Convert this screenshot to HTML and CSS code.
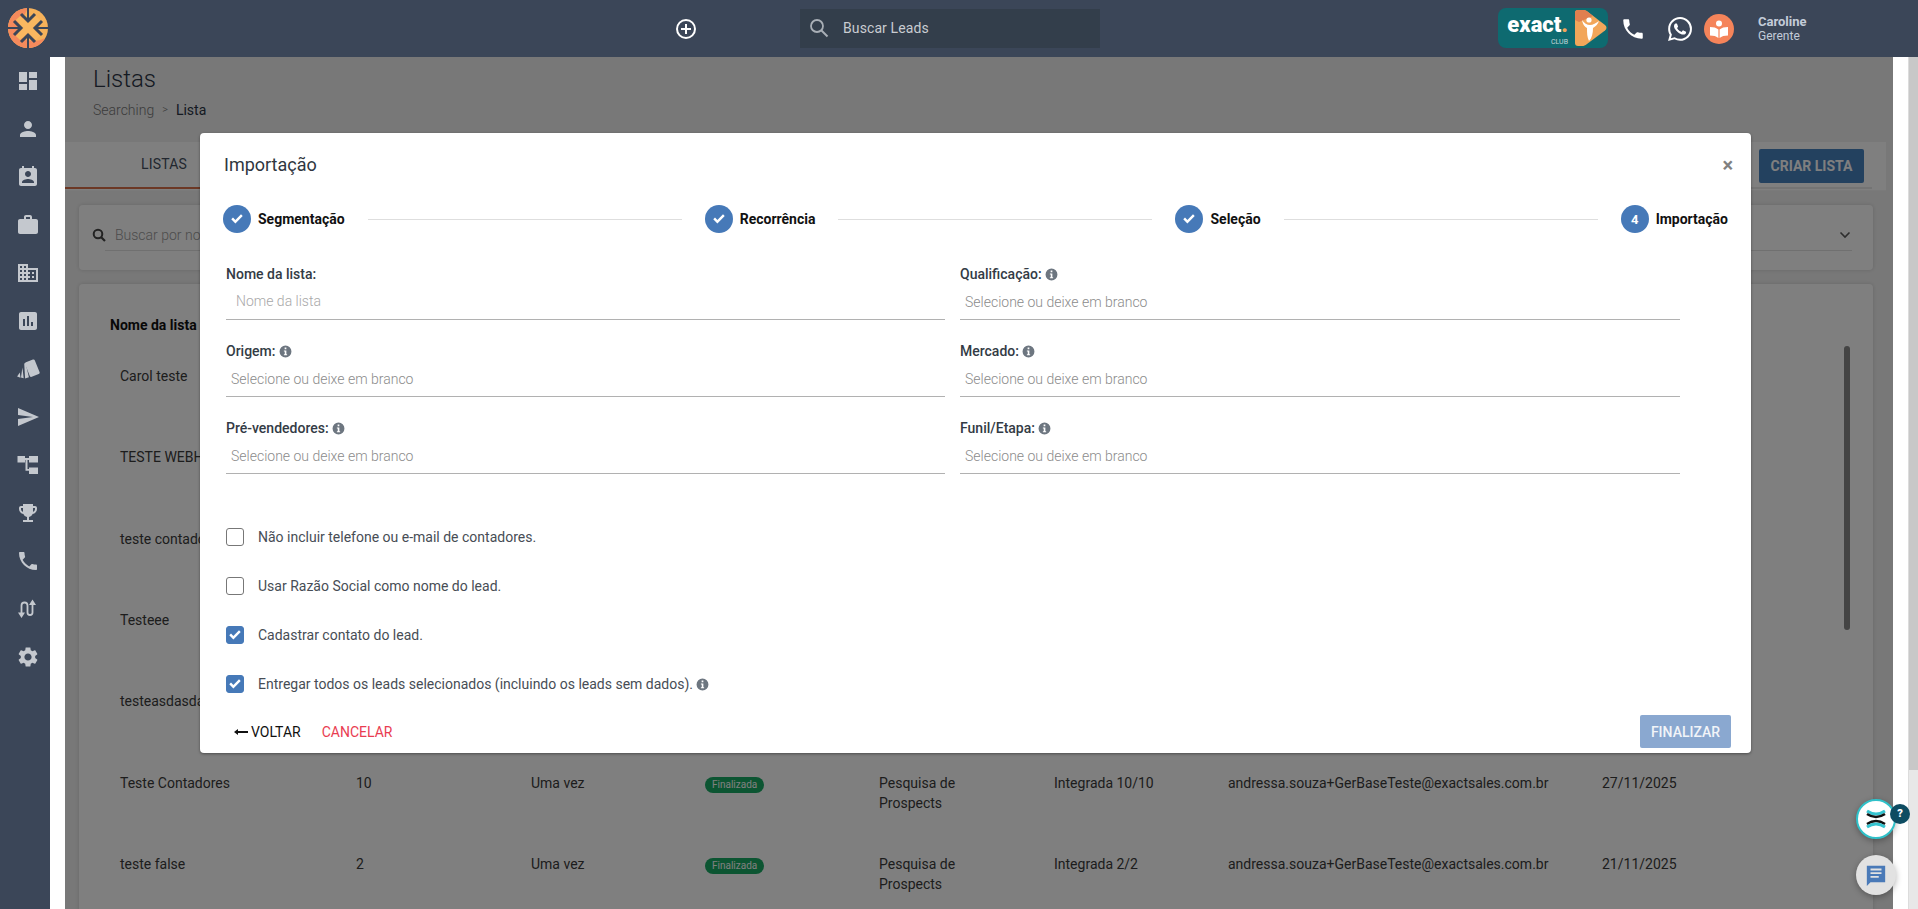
FILE: index.html
```html
<!DOCTYPE html>
<html lang="pt-BR">
<head>
<meta charset="utf-8">
<title>Listas</title>
<link rel="stylesheet" href="styles.css">
</head>
<body>
<svg class="sprites" aria-hidden="true">
  <symbol id="info" viewBox="0 0 24 24"><path d="M12 1a11 11 0 1 0 0 22 11 11 0 0 0 0-22zm-1.6 3.8h3.2v3.2h-3.2zM15 19H9v-2h1.6v-5H9v-2h4.6v7H15z"/></symbol>
  <symbol id="check" viewBox="0 0 24 24"><path d="M9.6 18.6 3.4 12.4l2.6-2.6 3.6 3.6 8.4-8.4 2.6 2.6z"/></symbol>
  <symbol id="phone" viewBox="0 0 24 24"><path d="M6.62 10.79c1.44 2.83 3.76 5.14 6.59 6.59l2.2-2.2c.27-.27.67-.36 1.02-.24 1.12.37 2.33.57 3.57.57.55 0 1 .45 1 1V20c0 .55-.45 1-1 1-9.39 0-17-7.61-17-17 0-.55.45-1 1-1h3.5c.55 0 1 .45 1 1 0 1.25.2 2.45.57 3.57.11.35.03.74-.25 1.02l-2.2 2.2z"/></symbol>
</svg>

<header class="topbar">
  <div class="brand">
    <svg width="42" height="42" viewBox="0 0 42 42">
      <circle cx="21" cy="21" r="20" fill="#f6b25a"/>
      <path d="M21 1a20 20 0 0 0-20 20h9a20 20 0 0 1 6-10zM1 21a20 20 0 0 0 20 20c8 0 14-4 17-10-8 4-17 4-24-1-3-2-4-5-4-9z" fill="#f58a5c"/>
      <path d="M21 1v12M21 29v12M1 21h12M29 21h12" stroke="#3b4658" stroke-width="2"/>
      <path d="M11 11l20 20M31 11 11 31" stroke="#f9b860" stroke-width="6"/>
      <path d="M14 7l7 7 7-7M14 35l7-7 7 7M7 14l7 7-7 7M35 14l-7 7 7 7" fill="none" stroke="#3b4658" stroke-width="3"/>
    </svg>
  </div>
  <div class="topcenter">
    <svg class="addicon" width="22" height="22" viewBox="0 0 22 22"><circle cx="11" cy="11" r="9" fill="none" stroke="#fff" stroke-width="2"/><path d="M11 6v10M6 11h10" stroke="#fff" stroke-width="2"/></svg>
    <div class="leadsearch">
      <svg width="20" height="20" viewBox="0 0 20 20"><circle cx="8" cy="8" r="6" fill="none" stroke="#a9afb6" stroke-width="1.8"/><path d="M12.5 12.5 18.5 18.5" stroke="#a9afb6" stroke-width="2"/></svg>
      <span>Buscar Leads</span>
    </div>
  </div>
  <div class="topright">
    <div class="club">
      <div class="clubtext"><span class="clubname">exact<i>.</i></span><span class="clubsub">CLUB</span></div>
      <svg width="32" height="36" viewBox="0 0 32 36">
        <path d="M3 0h5c2 0 3 .6 5 2l17 13c2 1.600 2 4 0 5.600L12 34c-2 1.400-3 2-5 2H3c-2 0-3-1-3-3V3c0-2 1-3 3-3z" fill="#f2a65a"/>
        <path d="M0 3c0-2 1-3 3-3h5c2 0 3 .6 5 2l5 4-14 6-4-2z" fill="#e07f4f"/>
        <circle cx="14" cy="10" r="2.600" fill="#fff"/>
        <path d="M7 10c1 5 3 7 5 8 0 5 0 9 2 13 3-3 4-8 4-13 3-2 5-4 6-7-3 2-6 4-9 4-3 0-6-2-8-5z" fill="#fff"/>
      </svg>
    </div>
    <svg class="ticon phone" width="26" height="26" viewBox="0 0 24 24" fill="#fff"><use href="#phone"/></svg>
    <svg class="ticon wa" width="24" height="24" viewBox="0 0 24 24" fill="#fff"><path d="M17.472 14.382c-.297-.149-1.758-.867-2.03-.967-.273-.099-.471-.148-.67.15-.197.297-.767.966-.94 1.164-.173.199-.347.223-.644.075-.297-.15-1.255-.463-2.39-1.475-.883-.788-1.48-1.761-1.653-2.059-.173-.297-.018-.458.13-.606.134-.133.298-.347.446-.52.149-.174.198-.298.298-.497.099-.198.05-.371-.025-.52-.075-.149-.669-1.612-.916-2.207-.242-.579-.487-.5-.669-.51-.173-.008-.371-.01-.57-.01-.198 0-.52.074-.792.372-.272.297-1.04 1.016-1.04 2.479 0 1.462 1.065 2.875 1.213 3.074.149.198 2.096 3.2 5.077 4.487.709.306 1.262.489 1.694.625.712.227 1.36.195 1.871.118.571-.085 1.758-.719 2.006-1.413.248-.694.248-1.289.173-1.413-.074-.124-.272-.198-.57-.347m-5.421 7.403h-.004a9.87 9.87 0 01-5.031-1.378l-.361-.214-3.741.982.998-3.648-.235-.374a9.86 9.86 0 01-1.51-5.26c.001-5.45 4.436-9.884 9.888-9.884 2.64 0 5.122 1.03 6.988 2.898a9.825 9.825 0 012.893 6.994c-.003 5.45-4.437 9.884-9.885 9.884m8.413-18.297A11.815 11.815 0 0012.05 0C5.495 0 .16 5.335.157 11.892c0 2.096.547 4.142 1.588 5.945L.057 24l6.305-1.654a11.882 11.882 0 005.683 1.448h.005c6.554 0 11.89-5.335 11.893-11.893a11.821 11.821 0 00-3.48-8.413z"/></svg>
    <div class="learn">
      <svg width="20" height="20" viewBox="0 0 20 20" fill="#fff"><circle cx="10" cy="4.500" r="3"/><path d="M1 8c3.500 0 6.500.8 8.400 2.500V19C7.500 17.300 4.500 16.500 1 16.500zM19 8c-3.500 0-6.500.8-8.400 2.500V19c1.900-1.700 4.900-2.500 8.400-2.500z"/></svg>
    </div>
    <div class="user"><strong>Caroline</strong><span>Gerente</span></div>
  </div>
</header>

<div class="body">
  <nav class="sidebar">
    <svg viewBox="0 0 24 24"><path d="M3 13h8V3H3v10zm0 8h8v-6H3v6zm10 0h8V11h-8v10zm0-18v6h8V3h-8z"/></svg>
    <svg viewBox="0 0 24 24"><path d="M12 12c2.210 0 4-1.790 4-4s-1.790-4-4-4-4 1.790-4 4 1.790 4 4 4zm0 2c-2.670 0-8 1.340-8 4v2h16v-2c0-2.660-5.330-4-8-4z"/></svg>
    <svg viewBox="0 0 24 24"><path d="M19 3h-1V1h-2v2H8V1H6v2H5c-1.110 0-2 .9-2 2v14c0 1.100.89 2 2 2h14c1.100 0 2-.9 2-2V5c0-1.100-.9-2-2-2zm-7 3c1.660 0 3 1.340 3 3s-1.340 3-3 3-3-1.340-3-3 1.340-3 3-3zm6 12H6v-1c0-2 4-3.100 6-3.100s6 1.100 6 3.100v1z"/></svg>
    <svg viewBox="0 0 24 24"><path d="M20 6h-4V4c0-1.110-.89-2-2-2h-4c-1.110 0-2 .89-2 2v2H4c-1.110 0-1.990.89-1.990 2L2 19c0 1.110.89 2 2 2h16c1.110 0 2-.89 2-2V8c0-1.110-.89-2-2-2zm-6 0h-4V4h4v2z"/></svg>
    <svg viewBox="0 0 24 24"><path d="M12 7V3H2v18h20V7H12zM6 19H4v-2h2v2zm0-4H4v-2h2v2zm0-4H4V9h2v2zm0-4H4V5h2v2zm4 12H8v-2h2v2zm0-4H8v-2h2v2zm0-4H8V9h2v2zm0-4H8V5h2v2zm10 12h-8v-2h2v-2h-2v-2h2v-2h-2V9h8v10zm-2-8h-2v2h2v-2zm0 4h-2v2h2v-2z"/></svg>
    <svg viewBox="0 0 24 24"><path d="M19 3H5c-1.100 0-2 .9-2 2v14c0 1.100.9 2 2 2h14c1.100 0 2-.9 2-2V5c0-1.100-.9-2-2-2zM9 17H7v-7h2v7zm4 0h-2V7h2v10zm4 0h-2v-4h2v4z"/></svg>
    <svg viewBox="0 0 24 24"><rect x="11" y="3.500" width="10.500" height="15.500" rx="1.500" transform="rotate(-22 16 11)"/><path d="M8.200 6.500 9.600 6l3.300 14.300-3.800 1.200zM6.400 10.500l1.300 10.700-2.700-.6zM3.800 15.500l.7 5.300-3.400-1.200z"/></svg>
    <svg viewBox="0 0 24 24"><path d="M2.010 21 23 12 2.010 3 2 10l15 2-15 2z"/></svg>
    <svg viewBox="0 0 24 24"><path d="M1.500 3H9v2h4v-2h9v6.500h-9V7h-1.500v9H13v-1.500h9V21h-9v-3.200H9.500V7H9v2.500H1.500z"/></svg>
    <svg viewBox="0 0 24 24"><path d="M19 5h-2V3H7v2H5c-1.100 0-2 .9-2 2v1c0 2.550 1.920 4.630 4.390 4.940.63 1.500 1.980 2.630 3.610 2.960V19H7v2h10v-2h-4v-3.100c1.630-.33 2.980-1.460 3.610-2.960C19.080 12.630 21 10.550 21 8V7c0-1.100-.9-2-2-2zM5 8V7h2v3.820C5.840 10.400 5 9.300 5 8zm14 0c0 1.300-.84 2.400-2 2.820V7h2v1z"/></svg>
    <svg viewBox="0 0 24 24"><use href="#phone"/></svg>
    <svg viewBox="0 0 24 24"><path d="M5.500 16V8.500a3 3 0 0 1 6 0v7a2.500 2.500 0 0 0 5 0V7" fill="none" stroke="#c4c8ce" stroke-width="1.800"/><path d="M2 15.500h7L5.500 21zM13 8h7l-3.500-5.500z"/></svg>
    <svg viewBox="0 0 24 24"><path d="M19.140 12.940c.04-.3.06-.61.06-.94 0-.32-.02-.64-.07-.94l2.030-1.580c.18-.14.23-.41.12-.61l-1.920-3.320c-.12-.22-.37-.29-.59-.22l-2.390.96c-.5-.38-1.030-.7-1.620-.94l-.36-2.540c-.04-.24-.24-.41-.48-.41h-3.840c-.24 0-.43.17-.47.41l-.36 2.540c-.59.24-1.130.57-1.620.94l-2.390-.96c-.22-.08-.47 0-.59.22L2.740 8.870c-.12.21-.08.47.12.61l2.030 1.580c-.05.3-.09.63-.09.94s.02.64.07.94l-2.030 1.580c-.18.14-.23.41-.12.61l1.920 3.320c.12.22.37.29.59.22l2.390-.96c.5.38 1.030.7 1.620.94l.36 2.540c.05.24.24.41.48.41h3.840c.24 0 .44-.17.47-.41l.36-2.540c.59-.24 1.130-.56 1.620-.94l2.390.96c.22.08.47 0 .59-.22l1.920-3.320c.12-.22.07-.47-.12-.61l-2.010-1.580zM12 15.600c-1.980 0-3.600-1.620-3.600-3.600s1.620-3.600 3.600-3.600 3.600 1.620 3.600 3.600-1.620 3.600-3.600 3.600z"/></svg>
  </nav>

  <div class="gutter"></div>

  <main class="page">
    <div class="pagehead">
      <h1>Listas</h1>
      <p class="crumbs"><span class="muted">Searching</span><span class="muted sep">&gt;</span><span>Lista</span></p>
    </div>
    <div class="tabs">
      <span class="tab">LISTAS</span>
      <button class="create">CRIAR LISTA</button>
    </div>
    <div class="card filters">
      <svg class="lens" width="14" height="14" viewBox="0 0 14 14"><circle cx="6" cy="6" r="4.300" fill="none" stroke="#444" stroke-width="2"/><path d="M9.200 9.200 13 13" stroke="#444" stroke-width="2.200"/></svg>
      <div class="filterrow">
        <span class="searchph">Buscar por nome</span>
        <svg class="chev" width="12" height="8" viewBox="0 0 12 8"><path d="M1.500 1.500 6 6l4.500-4.500" fill="none" stroke="#5c5c5c" stroke-width="1.600"/></svg>
      </div>
    </div>
    <div class="card listcard">
      <div class="row head"><b>Nome da lista</b></div>
      <div class="row"><span class="c1">Carol teste</span></div>
      <div class="row"><span class="c1">TESTE WEBHOOK</span></div>
      <div class="row"><span class="c1">teste contadores</span></div>
      <div class="row"><span class="c1">Testeee</span></div>
      <div class="row"><span class="c1">testeasdasdasd</span></div>
      <div class="row">
        <span class="c1">Teste Contadores</span><span class="c2">10</span><span class="c3">Uma vez</span>
        <span class="c4"><em class="badge">Finalizada</em></span><span class="c5">Pesquisa de Prospects</span>
        <span class="c6">Integrada 10/10</span><span class="c7">andressa.souza+GerBaseTeste@exactsales.com.br</span><span class="c8">27/11/2025</span>
      </div>
      <div class="row">
        <span class="c1">teste false</span><span class="c2">2</span><span class="c3">Uma vez</span>
        <span class="c4"><em class="badge">Finalizada</em></span><span class="c5">Pesquisa de Prospects</span>
        <span class="c6">Integrada 2/2</span><span class="c7">andressa.souza+GerBaseTeste@exactsales.com.br</span><span class="c8">21/11/2025</span>
      </div>
      <div class="tablescroll"></div>
    </div>
  </main>

  <div class="gutter right"></div>
  <div class="pagescroll"><div class="thumb"></div></div>

  <div class="backdrop"></div>

  <section class="modal">
    <div class="mhead"><h2>Importação</h2><span class="close">×</span></div>
    <div class="stepper">
      <span class="dot"><svg width="16" height="16" fill="#fff"><use href="#check"/></svg></span><b>Segmentação</b><i class="bar"></i>
      <span class="dot"><svg width="16" height="16" fill="#fff"><use href="#check"/></svg></span><b>Recorrência</b><i class="bar"></i>
      <span class="dot"><svg width="16" height="16" fill="#fff"><use href="#check"/></svg></span><b>Seleção</b><i class="bar"></i>
      <span class="dot">4</span><b>Importação</b>
    </div>
    <div class="formgrid">
      <label class="field"><span class="lbl">Nome da lista:</span><span class="inp indent">Nome da lista</span></label>
      <label class="field"><span class="lbl">Qualificação: <svg class="inf"><use href="#info"/></svg></span><span class="inp">Selecione ou deixe em branco</span></label>
      <label class="field"><span class="lbl">Origem: <svg class="inf"><use href="#info"/></svg></span><span class="inp">Selecione ou deixe em branco</span></label>
      <label class="field"><span class="lbl">Mercado: <svg class="inf"><use href="#info"/></svg></span><span class="inp">Selecione ou deixe em branco</span></label>
      <label class="field"><span class="lbl">Pré-vendedores: <svg class="inf"><use href="#info"/></svg></span><span class="inp">Selecione ou deixe em branco</span></label>
      <label class="field"><span class="lbl">Funil/Etapa: <svg class="inf"><use href="#info"/></svg></span><span class="inp">Selecione ou deixe em branco</span></label>
    </div>
    <div class="checks">
      <div class="chk"><span class="box"></span>Não incluir telefone ou e-mail de contadores.</div>
      <div class="chk"><span class="box"></span>Usar Razão Social como nome do lead.</div>
      <div class="chk"><span class="box on"><svg width="16" height="16" fill="#fff"><use href="#check"/></svg></span>Cadastrar contato do lead.</div>
      <div class="chk"><span class="box on"><svg width="16" height="16" fill="#fff"><use href="#check"/></svg></span>Entregar todos os leads selecionados (incluindo os leads sem dados).&nbsp;<svg class="inf"><use href="#info"/></svg></div>
    </div>
    <div class="mfoot">
      <span class="back"><svg width="14" height="8" viewBox="0 0 14 8"><path d="M0 4l4-3v2h10v2H4v2z" fill="#111"/></svg>VOLTAR</span>
      <span class="cancel">CANCELAR</span>
      <button class="finish">FINALIZAR</button>
    </div>
  </section>

  <div class="fab help">
    <svg width="22" height="22" viewBox="0 0 22 22"><path d="M2 3c6 4 12 4 18 0" fill="none" stroke="#35c3cf" stroke-width="3"/><path d="M2 6c6 4 12 4 18 0M2 16c6-4 12-4 18 0" fill="none" stroke="#111" stroke-width="2.500"/><path d="M2 19c6-4 12-4 18 0" fill="none" stroke="#35c3cf" stroke-width="3"/></svg>
    <span class="q">?</span>
  </div>
  <div class="fab chat">
    <svg width="22" height="22" viewBox="0 0 24 24" fill="#4a7ab8"><path d="M22 2H2v22l4-4h16zM6 13h9v2H6zm0-4h12v2H6zm0-4h12v2H6z"/></svg>
  </div>
</div>
</body>
</html>
```

FILE: styles.css
```css
* { box-sizing: border-box; }
html, body { margin: 0; height: 100%; overflow: hidden; }
body { font-family: Roboto, "Liberation Sans", sans-serif; font-size: 14px; color: #333; background: #fff; }
.sprites { display: none; }

.topbar { height: 57px; background: #3b4658; display: flex; align-items: center; position: relative; z-index: 5; }
.brand { width: 50px; display: flex; padding-left: 7px; margin-top: -1px; }
.topcenter { display: flex; align-items: center; margin-left: 625px; }
.addicon { margin-right: 103px; }
.leadsearch { width: 300px; height: 39px; background: #333e4b; display: flex; align-items: center; padding-left: 9px; color: #c9ccd1; font-size: 14px; gap: 14px; margin-top: -1px; letter-spacing: .1px; }
.topright { display: flex; align-items: center; margin-left: 398px; }
.club { width: 110px; height: 40px; background: #0e6a70; border-radius: 8px; display: flex; align-items: center; padding-left: 7px; gap: 7px; margin-top: -1px; }
.clubtext { display: flex; flex-direction: column; align-items: flex-end; width: 63px; margin-top: 5px; color: #fff; }
.clubname { font-size: 22px; font-weight: 900; line-height: 20px; }
.clubname i { color: #f2a65a; font-style: normal; }
.clubsub { font-size: 7px; line-height: 8px; margin-top: 3px; color: #c8d8da; }
.ticon.phone { margin-left: 12px; }
.ticon.wa { margin-left: 22px; }
.learn { width: 30px; height: 30px; margin-left: 12px; border-radius: 50%; background: #f5845a; display: flex; align-items: center; justify-content: center; }
.user { display: flex; flex-direction: column; margin-left: 24px; color: #c3ccd8; line-height: 15px; }
.user strong { font-size: 13px; font-weight: 700; }
.user span { font-size: 12px; }

.body { position: relative; display: flex; height: 852px; overflow: hidden; }
.sidebar { width: 50px; background: #3b4658; display: flex; flex-direction: column; align-items: center; padding: 12px 0 0 6px; gap: 24px; flex: none; position: relative; z-index: 4; }
.sidebar svg { width: 24px; height: 24px; fill: #c4c8ce; flex: none; }
.gutter { width: 15px; background: #fff; flex: none; position: relative; z-index: 4; }
.page { width: 1828px; flex: none; background: #f1f1f1; position: relative; overflow: hidden; }
.gutter.right { z-index: 4; }
.pagescroll { width: 10px; background: #e8e8e8; flex: none; position: relative; z-index: 4; border-left: 1px solid #dcdcdc; }
.thumb { height: 713px; background: #c8c8c8; }

.pagehead { padding: 7px 0 0 28px; height: 85px; color: #222; }
.pagehead h1 { margin: 0; font-size: 24px; font-weight: 300; line-height: 30px; color: #2a3444; }
.crumbs { margin: 7px 0 0; font-size: 14px; line-height: 18px; font-weight: 400; display: flex; gap: 8px; color: #2a3444; }
.muted { color: #777; font-weight: 300; }
.sep { font-size: 11px; }

.tabs { height: 49px; margin-right: 7px; background: #fff; position: relative; border-bottom: 1px solid #f4f4f4; display: flex; align-items: flex-start; }
.tabs::after { content: ""; display: block; position: absolute; left: 0; right: 14px; bottom: 1px; height: 2px; background: linear-gradient(90deg, #d8704b 0 300px, #e8e8e8 300px); }
.tab { width: 198px; text-align: center; line-height: 44px; font-size: 14px; color: #444f60; letter-spacing: .2px; }
.create { position: absolute; right: 22px; top: 7px; width: 105px; height: 34px; background: #4682be; color: #fff; border: 0; border-radius: 2px; font: 700 14px Roboto, sans-serif; white-space: nowrap; padding: 0; }

.card { background: #fff; margin: 0 20px 0 14px; border-radius: 4px; box-shadow: 0 0 4px rgba(0,0,0,.15); }
.filters { margin-top: 14px; height: 65px; display: flex; align-items: flex-start; padding: 0 21px 0 13px; }
.lens { margin-top: 23px; flex: none; }
.filterrow { flex: 1; height: 46px; margin-left: -1px; padding: 15px 1px 0 10px; border-bottom: 1px solid #e0e0e0; display: flex; align-items: center; }
.searchph { color: #999; font-weight: 300; }
.chev { margin-left: auto; }
.listcard { margin-top: 14px; height: 700px; position: relative; padding: 0 0 0 31px; }
.row { height: 81.33px; padding-top: 11px; display: flex; align-items: flex-start; color: #3a3a3a; font-size: 14px; line-height: 21px; margin-left: 10px; }
.row.head { height: 71px; margin-left: 0; padding-top: 31px; color: #111; }
.row span { flex: none; }
.c1 { width: 236px; }
.c2 { width: 175px; }
.c3 { width: 174px; }
.c4 { width: 174px; }
.row .c5 { width: 175px; padding-right: 60px; line-height: 20px; }
.c6 { width: 174px; }
.c7 { width: 374px; white-space: nowrap; }
.badge { display: inline-block; font-style: normal; font-size: 10px; line-height: 15px; height: 16px; padding: 0 7px; margin-top: 3px; border-radius: 8px; background: #18aa64; color: #fff; }
.tablescroll { position: absolute; right: 23px; top: 62px; width: 6px; height: 284px; border-radius: 3px; background: #888; }

.backdrop { position: absolute; left: 65px; top: 0; width: 1828px; bottom: 0; background: rgba(0,0,0,.5); z-index: 2; }

.modal { position: absolute; left: 200px; top: 76px; width: 1551px; height: 620px; background: #fff; border-radius: 4px; z-index: 3; display: flex; flex-direction: column; box-shadow: 0 1px 3px rgba(0,0,0,.4); }
.mhead { height: 63px; display: flex; align-items: center; justify-content: space-between; padding: 0 18px 0 24px; flex: none; }
.mhead h2 { margin: 0; font-size: 18px; font-weight: 400; color: #2f3640; }
.close { font-size: 20px; font-weight: 700; color: #808080; line-height: 20px; }
.stepper { height: 28px; flex: none; margin: 9px 23px 0 23px; display: flex; align-items: center; }
.stepper b { color: #111; font-size: 14px; font-weight: 700; margin-left: 7px; white-space: nowrap; }
.dot { width: 28px; height: 28px; border-radius: 50%; background: #4679b8; display: flex; align-items: center; justify-content: center; color: #fff; font-size: 13px; font-weight: 700; flex: none; }
.dot svg { display: block; }
.bar { flex: 1; height: 1px; background: #dedede; margin: 0 23px; }
.formgrid { display: grid; grid-template-columns: 719px 720px; column-gap: 15px; margin: 0 0 0 26px; padding-top: 31px; flex: none; }
.field { display: flex; flex-direction: column; height: 77px; }
.lbl { font-size: 14px; font-weight: 500; color: #333b45; line-height: 20px; display: flex; align-items: center; gap: 3px; height: 20px; }
.inf { width: 13px; height: 13px; fill: #6d7680; flex: none; }
.inp { height: 35px; margin-top: 1px; padding: 7px 0 0 5px; font-size: 14px; font-weight: 300; color: #8b8b8b; border-bottom: 1px solid #b1b1b1; line-height: 20px; }
.inp.indent { padding: 6px 0 0 10px; color: #a8a8a8; }
.checks { flex: none; margin: 33px 0 0 26px; display: flex; flex-direction: column; gap: 31px; }
.chk { display: flex; align-items: center; height: 18px; font-size: 14px; color: #474d55; }
.box { width: 18px; height: 18px; border: 1px solid #777; border-radius: 3px; margin-right: 14px; display: flex; align-items: center; justify-content: center; background: #fff; flex: none; }
.box.on { background: #4679b8; border-color: #4679b8; }
.mfoot { display: flex; align-items: center; margin: 22px 20px 0 34px; height: 33px; font-size: 14px; }
.back { color: #111; display: flex; align-items: center; gap: 3px; }
.cancel { color: #e93c51; margin-left: 21px; }
.finish { margin-left: auto; width: 91px; height: 33px; border: 0; border-radius: 2px; background: #8aa8d0; color: #f1f4f8; font: 500 14px Roboto, sans-serif; padding: 0; }

.fab { position: absolute; left: 1856px; width: 40px; height: 40px; border-radius: 50%; z-index: 4; display: flex; align-items: center; justify-content: center; box-shadow: 0 2px 6px rgba(0,0,0,.3); }
.help { top: 742px; background: #fff; border: 2px solid #2fc1c9; }
.q { position: absolute; right: -16px; top: 3px; width: 20px; height: 20px; border-radius: 50%; background: #0e4c62; color: #fff; font-size: 11px; font-weight: 900; text-align: center; line-height: 20px; }
.chat { top: 798px; background: #e2e2e2; }
```
